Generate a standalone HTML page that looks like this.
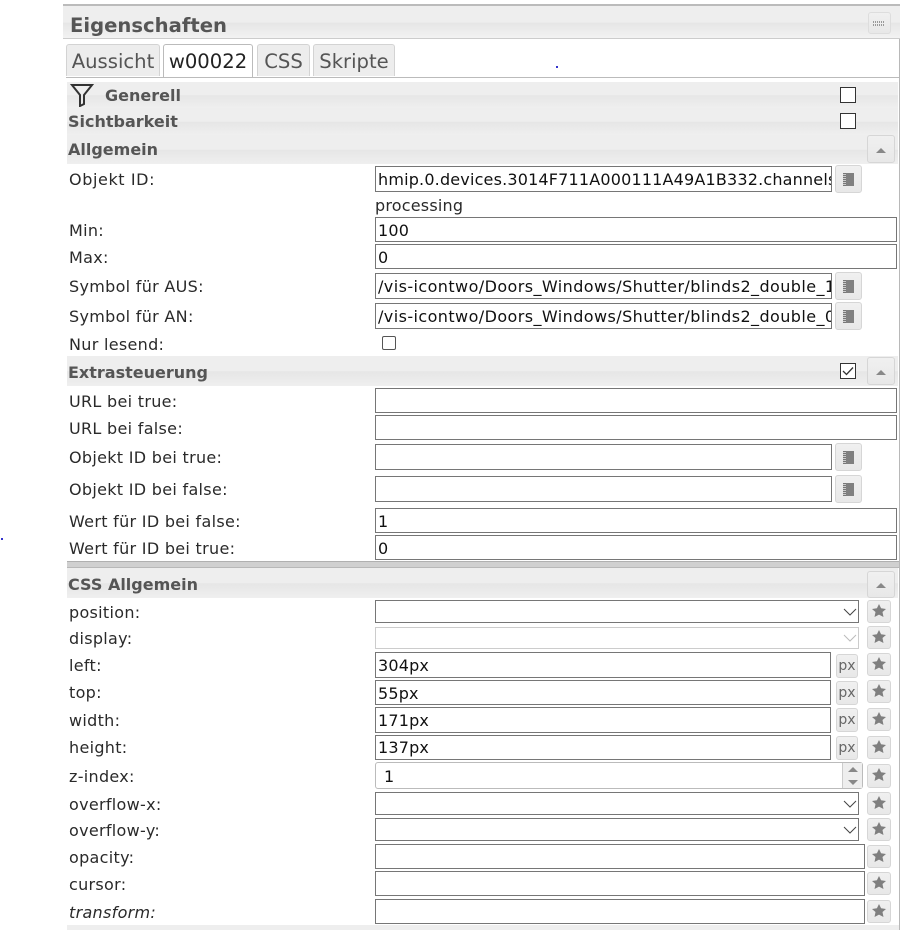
<!DOCTYPE html>
<html><head><meta charset="utf-8"><style>
html,body{margin:0;padding:0;background:#fff;width:901px;height:930px;overflow:hidden}
body{position:relative;font-family:"DejaVu Sans",sans-serif;color:#222}
div,svg{position:absolute;box-sizing:border-box}
.h{left:67px;width:831px;background:linear-gradient(#eeeeee 0,#eeeeee 50%,#e6e6e6 52%,#efefef 100%);}
.t{font-weight:bold;font-size:16px;color:#555;white-space:nowrap;line-height:22px;left:68px;height:22px;margin-top:1px}
.l{left:69px;font-size:16px;letter-spacing:.3px;line-height:22px;height:22px;white-space:nowrap;color:#2a2a2a;margin-top:1px}
.i{border:1px solid #767676;background:#fff;font-size:16px;letter-spacing:.18px;line-height:25px;padding-left:2px;white-space:nowrap;overflow:hidden;color:#111;left:375px}
.b{border:1px solid #d6d6d6;border-radius:3px;background:linear-gradient(#f0f0f0,#e8e8e8)}
.tab{top:44px;height:32px;border:1px solid #d3d3d3;border-bottom:0;border-radius:3px 3px 0 0;background:#ededed;font-size:19.6px;line-height:33px;text-align:center;color:#555}
.c{width:16px;height:16px;border:1px solid #333;background:#fff}
.up{width:0;height:0;border-left:5px solid transparent;border-right:5px solid transparent;border-bottom:5px solid #888}
.star{background:#7f7f7f;width:14px;height:13px;left:4px;top:3px;clip-path:polygon(50% 0,65% 33%,100% 38%,75% 62%,82% 100%,50% 82%,18% 100%,25% 62%,0 38%,35% 33%)}
.px{font-size:14px;color:#666;text-align:center;line-height:22px}
.bk{width:11px;height:13px;left:7px;top:7px;background:linear-gradient(90deg,#aaa 0,#aaa 3px,#808080 3px,#808080 100%)}
.bk:before{content:"";position:absolute;left:0;top:0;width:3px;height:13px;background:repeating-linear-gradient(#777 0,#777 1px,#ccc 1px,#ccc 2px)}
</style></head><body>

<div style="left:899px;top:4px;width:1px;height:926px;background:#b8b8b8"></div>
<div style="left:63px;top:4px;width:837px;height:35px;border-top:2px solid #bbb;border-bottom:1px solid #ccc;background:linear-gradient(#eeeeee 0,#eeeeee 50%,#e6e6e6 54%,#f2f2f2 100%)"></div>
<div style="left:70px;top:13px;font-weight:bold;font-size:19.6px;line-height:26px;height:26px;color:#555;white-space:nowrap">Eigenschaften</div>
<div class="b" style="left:868px;top:12px;width:23px;height:22px;border-color:#ddd"></div>
<div style="left:873px;top:21px;width:12px;height:5px;background:repeating-linear-gradient(90deg,#999 0,#999 1px,transparent 1px,transparent 2px)"></div>
<div style="left:873px;top:23px;width:12px;height:1px;background:#eee"></div>

<div class="tab" style="left:66px;width:94px">Aussicht</div>
<div class="tab" style="left:163px;width:90px;height:34px;background:#fff;color:#222;border-color:#bbb">w00022</div>
<div class="tab" style="left:257px;width:53px">CSS</div>
<div class="tab" style="left:313px;width:82px">Skripte</div>
<div style="left:66px;top:77px;width:833px;height:1px;background:#bbb"></div>
<div style="left:556px;top:66px;width:2px;height:2px;background:#33c"></div>
<div style="left:1px;top:538px;width:2px;height:2px;background:#33c"></div>

<div class="h" style="top:82px;height:26px"></div>
<div class="h" style="top:108px;height:27px"></div>
<div class="h" style="top:135px;height:29px"></div>
<svg style="left:70px;top:83px" width="24" height="24" viewBox="0 0 24 24" fill="none" stroke="#333" stroke-width="2"><path d="M2 2H22L14 12V21L10 23V12Z"/></svg>
<div class="t" style="left:105px;top:84px">Generell</div>
<div class="t" style="top:110px">Sichtbarkeit</div>
<div class="t" style="top:138px">Allgemein</div>
<div class="c" style="left:840px;top:87px"></div>
<div class="c" style="left:840px;top:113px"></div>
<div class="b" style="left:867px;top:135px;width:28px;height:28px"><div class="up" style="left:8px;top:12px"></div></div>

<div class="l" style="top:168px;letter-spacing:.6px">Objekt ID:</div>
<div class="i" style="top:166px;width:457px;height:26px">hmip.0.devices.3014F711A000111A49A1B332.channels.3.process</div>
<div class="b" style="left:835px;top:165px;width:27px;height:28px"><div class="bk"></div></div>
<div class="l" style="left:375px;top:194px;letter-spacing:.2px">processing</div>
<div class="l" style="top:219px">Min:</div>
<div class="i" style="top:217px;width:522px;height:25px">100</div>
<div class="l" style="top:246px">Max:</div>
<div class="i" style="top:244px;width:522px;height:25px">0</div>
<div class="l" style="top:275px">Symbol für AUS:</div>
<div class="i" style="top:273px;width:457px;height:26px;letter-spacing:.42px">/vis-icontwo/Doors_Windows/Shutter/blinds2_double_100.png</div>
<div class="b" style="left:835px;top:272px;width:27px;height:28px"><div class="bk"></div></div>
<div class="l" style="top:305px">Symbol für AN:</div>
<div class="i" style="top:303px;width:457px;height:26px;letter-spacing:.42px">/vis-icontwo/Doors_Windows/Shutter/blinds2_double_0.png</div>
<div class="b" style="left:835px;top:302px;width:27px;height:28px"><div class="bk"></div></div>
<div class="l" style="top:333px">Nur lesend:</div>
<div style="left:382px;top:336px;width:14px;height:14px;border:1px solid #555;border-radius:2px;background:#fff"></div>

<div class="h" style="top:356px;height:30px"></div>
<div class="t" style="top:361px">Extrasteuerung</div>
<div class="c" style="left:840px;top:363px"></div>
<svg style="left:840px;top:363px" width="16" height="16" fill="none" stroke="#333" stroke-width="1.3"><path d="M3 8L6.5 11.5L13 4.5"/></svg>
<div class="b" style="left:867px;top:357px;width:28px;height:28px"><div class="up" style="left:8px;top:12px"></div></div>

<div class="l" style="top:390px">URL bei true:</div>
<div class="i" style="top:388px;width:522px;height:25px"></div>
<div class="l" style="top:417px">URL bei false:</div>
<div class="i" style="top:415px;width:522px;height:25px"></div>
<div class="l" style="top:446px">Objekt ID bei true:</div>
<div class="i" style="top:444px;width:457px;height:26px"></div>
<div class="b" style="left:835px;top:443px;width:27px;height:28px"><div class="bk"></div></div>
<div class="l" style="top:478px">Objekt ID bei false:</div>
<div class="i" style="top:476px;width:457px;height:26px"></div>
<div class="b" style="left:835px;top:475px;width:27px;height:28px"><div class="bk"></div></div>
<div class="l" style="top:510px">Wert für ID bei false:</div>
<div class="i" style="top:508px;width:522px;height:25px">1</div>
<div class="l" style="top:537px">Wert für ID bei true:</div>
<div class="i" style="top:535px;width:522px;height:25px">0</div>
<div style="left:67px;top:561px;width:832px;height:7px;background:#d0d0d0;border-top:1px solid #b0b0b0;border-bottom:1px solid #b8b8b8"></div>

<div class="h" style="top:568px;height:30px"></div>
<div class="t" style="top:573px">CSS Allgemein</div>
<div class="b" style="left:867px;top:571px;width:28px;height:27px"><div class="up" style="left:8px;top:11px"></div></div>

<div class="l" style="top:601px">position:</div>
<div class="i" style="top:600px;width:484px;height:23px"></div>
<svg style="left:843px;top:607px" width="14" height="10" fill="none" stroke="#444" stroke-width="1"><path d="M1 2L7 8L13 2"/></svg>
<div class="b" style="left:867px;top:600px;width:24px;height:23px"><div class="star"></div></div>

<div class="l" style="top:627px">display:</div>
<div class="i" style="top:627px;width:484px;height:22px;border-color:#ccc"></div>
<svg style="left:843px;top:633px" width="14" height="10" fill="none" stroke="#bbb" stroke-width="1"><path d="M1 2L7 8L13 2"/></svg>
<div class="b" style="left:867px;top:626px;width:24px;height:23px"><div class="star"></div></div>

<div class="l" style="top:654px">left:</div>
<div class="i" style="top:652px;width:456px;height:26px">304px</div>
<div class="b px" style="left:836px;top:654px;width:22px;height:24px">px</div>
<div class="b" style="left:867px;top:653px;width:24px;height:23px"><div class="star"></div></div>

<div class="l" style="top:681px">top:</div>
<div class="i" style="top:680px;width:456px;height:25px">55px</div>
<div class="b px" style="left:836px;top:681px;width:22px;height:24px">px</div>
<div class="b" style="left:867px;top:680px;width:24px;height:23px"><div class="star"></div></div>

<div class="l" style="top:709px">width:</div>
<div class="i" style="top:707px;width:456px;height:26px">171px</div>
<div class="b px" style="left:836px;top:708px;width:22px;height:24px">px</div>
<div class="b" style="left:867px;top:708px;width:24px;height:23px"><div class="star"></div></div>

<div class="l" style="top:736px">height:</div>
<div class="i" style="top:735px;width:456px;height:25px;line-height:24px">137px</div>
<div class="b px" style="left:836px;top:736px;width:22px;height:24px">px</div>
<div class="b" style="left:867px;top:736px;width:24px;height:23px"><div class="star"></div></div>

<div class="l" style="top:765px">z-index:</div>
<div class="i" style="top:762px;width:488px;height:27px;border-color:#bbb;border-radius:3px;padding-left:8px;line-height:27px">1</div>
<div style="left:842px;top:763px;width:20px;height:25px;background:#eee;border-left:1px solid #ccc"></div>
<div class="up" style="left:848px;top:767px"></div>
<div class="up" style="left:848px;top:780px;transform:rotate(180deg)"></div>
<div class="b" style="left:867px;top:764px;width:24px;height:24px"><div class="star"></div></div>

<div class="l" style="top:793px">overflow-x:</div>
<div class="i" style="top:792px;width:484px;height:23px"></div>
<svg style="left:843px;top:799px" width="14" height="10" fill="none" stroke="#444" stroke-width="1"><path d="M1 2L7 8L13 2"/></svg>
<div class="b" style="left:867px;top:792px;width:24px;height:23px"><div class="star"></div></div>

<div class="l" style="top:819px">overflow-y:</div>
<div class="i" style="top:818px;width:484px;height:23px"></div>
<svg style="left:843px;top:825px" width="14" height="10" fill="none" stroke="#444" stroke-width="1"><path d="M1 2L7 8L13 2"/></svg>
<div class="b" style="left:867px;top:818px;width:24px;height:23px"><div class="star"></div></div>

<div class="l" style="top:846px">opacity:</div>
<div class="i" style="top:844px;width:490px;height:25px"></div>
<div class="b" style="left:867px;top:845px;width:24px;height:23px"><div class="star"></div></div>

<div class="l" style="top:873px">cursor:</div>
<div class="i" style="top:871px;width:490px;height:25px"></div>
<div class="b" style="left:867px;top:872px;width:24px;height:23px"><div class="star"></div></div>

<div class="l" style="top:901px;font-style:italic">transform:</div>
<div class="i" style="top:899px;width:490px;height:25px"></div>
<div class="b" style="left:867px;top:900px;width:24px;height:23px"><div class="star"></div></div>

<div style="left:67px;top:925px;width:832px;height:5px;background:#eee"></div>
</body></html>
